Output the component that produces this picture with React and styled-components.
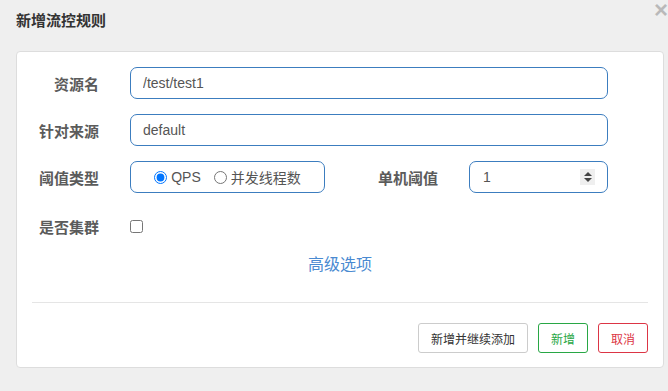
import React from 'react';
import styled, { createGlobalStyle } from 'styled-components';

// +++++++++ CSS +++++++++

const GlobalStyle = createGlobalStyle`
	html, body {
		margin: 0;
		background: #efefef;
		font-family: "Liberation Sans", "Noto Sans CJK SC", sans-serif;
	}
	* { box-sizing: border-box; }
`;

const Page = styled.div`
	width: 668px;
	height: 391px;
	padding: 10px 4px 0 16px;
	overflow: hidden;
`;

const Header = styled.div`
	display: flex;
	justify-content: space-between;
	align-items: flex-start;
	height: 21px;
	margin-bottom: 20px;
`;

const Title = styled.h4`
	margin: 0;
	font-size: 15px;
	line-height: 21px;
	font-weight: bold;
	color: #333;
`;

const Close = styled.span`
	margin: -12px -4px 0 0;
	font-family: "Liberation Sans", sans-serif;
	font-size: 24px;
	font-weight: bold;
	line-height: 1;
	color: #000;
	opacity: 0.22;
`;

const Card = styled.div`
	background: #fff;
	border: 1px solid #ddd;
	border-radius: 4px;
	padding: 15px 15px 14px 15px;
`;

const Row = styled.div`
	display: flex;
	align-items: center;
	height: 32px;
	margin-bottom: ${p => p.$gap ?? 15}px;
`;

const Label = styled.label`
	width: ${p => p.$w || 67}px;
	margin-right: 31px;
	text-align: right;
	font-size: 15px;
	font-weight: bold;
	color: #5b5b5b;
	white-space: nowrap;
`;

const TextInput = styled.input`
	width: 478px;
	height: 32px;
	padding: 0 12px;
	border: 1px solid #3c7dbf;
	border-radius: 7px;
	font-family: inherit;
	font-size: 14px;
	color: #555;
	outline: none;
`;

const RadioBox = styled.div`
	display: flex;
	align-items: center;
	justify-content: center;
	width: 195px;
	height: 32px;
	border: 1px solid #3c7dbf;
	border-radius: 7px;
	font-size: 14px;
	color: #555;
`;

const RadioItem = styled.label`
	display: flex;
	align-items: center;
	gap: 4px;
	margin-right: ${p => (p.$last ? 0 : 13)}px;
	input {
		margin: 0;
		width: 13px;
		height: 13px;
	}
`;

const NumberBox = styled.div`
	display: flex;
	align-items: center;
	justify-content: space-between;
	width: 139px;
	height: 32px;
	padding: 0 12px 0 13px;
	border: 1px solid #3c7dbf;
	border-radius: 7px;
	font-size: 14px;
	color: #555;
`;

const Spinner = styled.span`
	display: flex;
	flex-direction: column;
	align-items: center;
	justify-content: center;
	gap: 2px;
	width: 15px;
	height: 16px;
	background: #efefef;
`;

const Arrow = styled.span`
	width: 0;
	height: 0;
	border-left: 4px solid transparent;
	border-right: 4px solid transparent;
	${p => (p.$up ? 'border-bottom' : 'border-top')}: 4px solid #444;
`;

const Check = styled.input`
	margin: 0;
	width: 13px;
	height: 13px;
`;

const Advanced = styled.div`
	margin-top: 12px;
	text-align: center;
	font-size: 16px;
	line-height: 22px;
	color: #4a8ad1;
`;

const Divider = styled.hr`
	margin: 26px 0 20px;
	border: 0;
	border-top: 1px solid #e5e5e5;
`;

const Footer = styled.div`
	display: flex;
	justify-content: flex-end;
	gap: 10px;
`;

const Button = styled.button`
	height: 30px;
	padding: 0 12px;
	background: #fff;
	border: 1px solid ${p => p.$color || '#ccc'};
	border-radius: 3px;
	font-family: inherit;
	font-size: 12px;
	color: ${p => (p.$color ? p.$color : '#333')};
`;

// +++++++++ COMPONENT +++++++++

const App = () => (
	<Page>
		<GlobalStyle />
		<Header>
			<Title>新增流控规则</Title>
			<Close>×</Close>
		</Header>
		<Card>
			<Row>
				<Label>资源名</Label>
				<TextInput defaultValue="/test/test1" />
			</Row>
			<Row>
				<Label>针对来源</Label>
				<TextInput defaultValue="default" />
			</Row>
			<Row $gap={17}>
				<Label>阈值类型</Label>
				<RadioBox>
					<RadioItem>
						<input type="radio" name="grade" defaultChecked />
						QPS
					</RadioItem>
					<RadioItem $last>
						<input type="radio" name="grade" />
						并发线程数
					</RadioItem>
				</RadioBox>
				<Label $w={113}>单机阈值</Label>
				<NumberBox>
					<span>1</span>
					<Spinner>
						<Arrow $up />
						<Arrow />
					</Spinner>
				</NumberBox>
			</Row>
			<Row $gap={0}>
				<Label>是否集群</Label>
				<Check type="checkbox" />
			</Row>
			<Advanced>高级选项</Advanced>
			<Divider />
			<Footer>
				<Button>新增并继续添加</Button>
				<Button $color="#28a745">新增</Button>
				<Button $color="#dc3545">取消</Button>
			</Footer>
		</Card>
	</Page>
);

export default App;
